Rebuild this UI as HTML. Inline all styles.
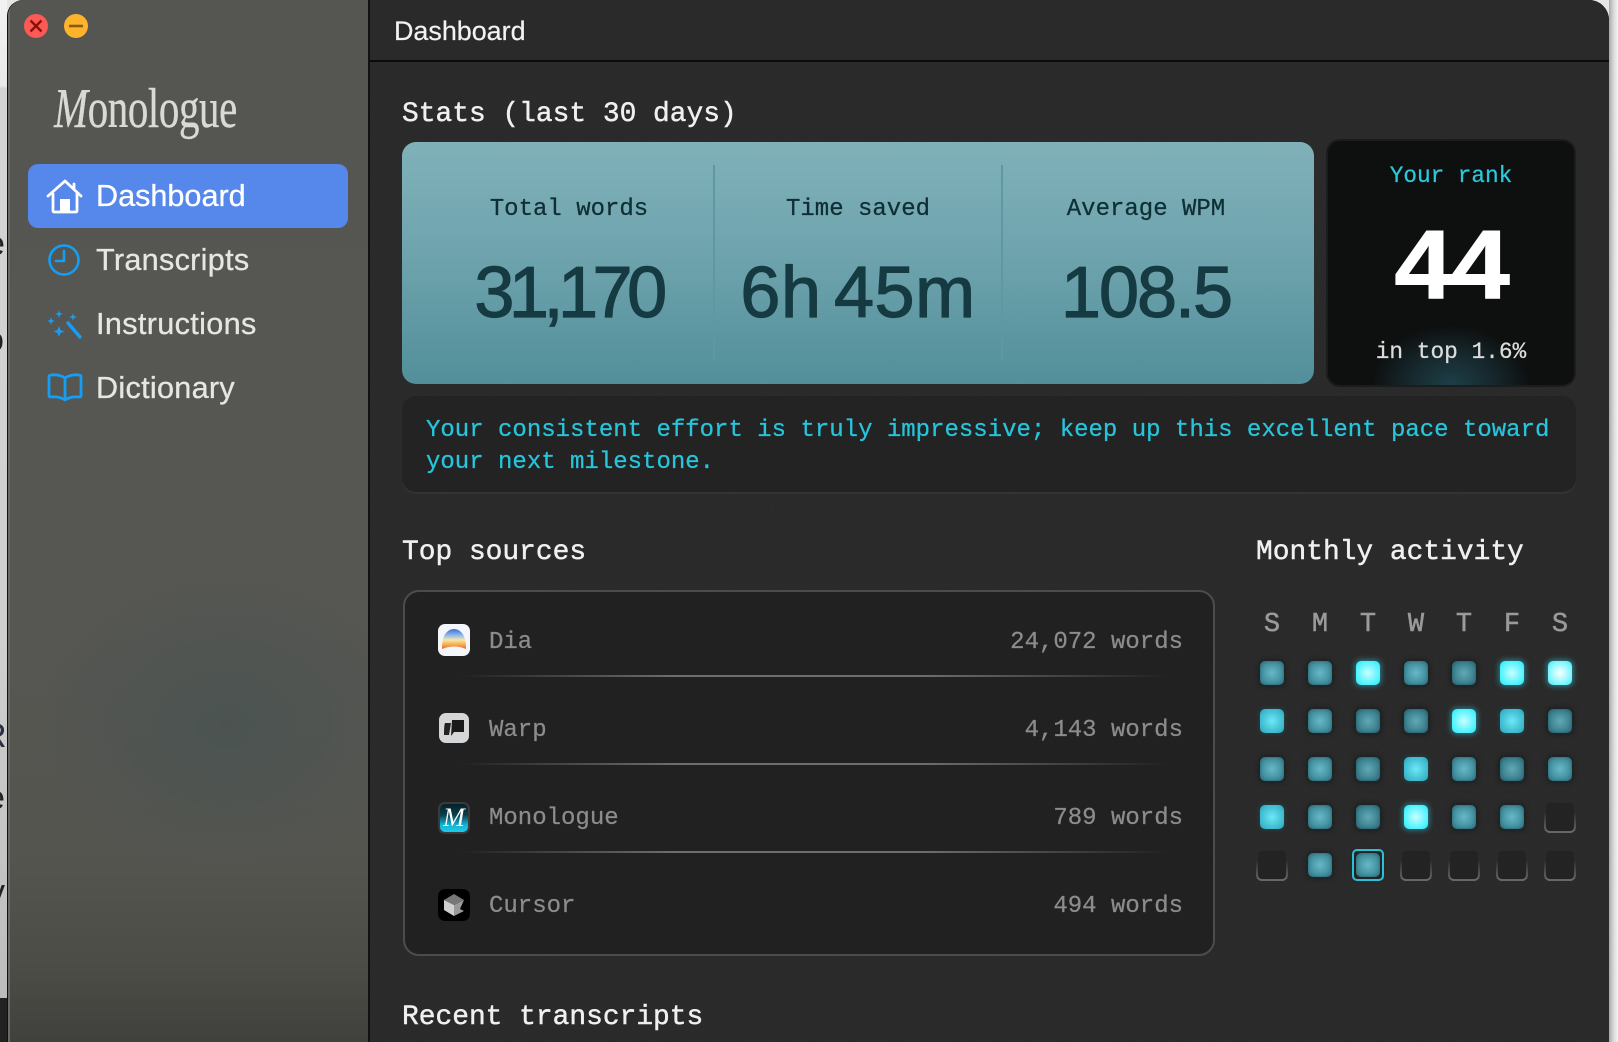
<!DOCTYPE html>
<html><head><meta charset="utf-8">
<style>
*,*:before,*:after{box-sizing:border-box;margin:0;padding:0}
html,body{width:1618px;height:1042px;overflow:hidden;background:#e6e6e6}
body{position:relative;font-family:"Liberation Sans",sans-serif}
.a{position:absolute;white-space:pre}
.m{font-family:"Liberation Mono",monospace}
.t{font-size:27.9px;line-height:34px;color:#f0f0f0;-webkit-text-stroke:.45px #f0f0f0}
#win{position:absolute;left:7px;top:0;width:1602px;height:1042px;border-radius:16px 20px 0 0;overflow:hidden;background:#2c2c2c;border-left:1.5px solid #111}
.lab{font-size:24px;line-height:30px;color:#0f2e35;text-align:center;width:280px;-webkit-text-stroke:.25px #0f2e35}
.num{font-size:72px;line-height:80px;color:#163a42;text-align:center;width:280px;-webkit-text-stroke:1.2px #163a42}
.nav{font-size:30.6px;line-height:40px;color:#e6e6e4;left:96px;-webkit-text-stroke:.3px #e6e6e4}
.src{font-size:24px;line-height:30px;color:#8c8c8c;-webkit-text-stroke:.25px #8c8c8c}
.div{position:absolute;left:460px;width:710px;height:2px;background:linear-gradient(90deg,rgba(130,130,130,0),#6e6e6e 30%,#6e6e6e 65%,rgba(130,130,130,0))}
.ic{position:absolute;left:438px;width:32px;height:32px;border-radius:7px;overflow:hidden}
.d{position:absolute;width:20px;font-size:27px;line-height:30px;top:610px;text-align:center;color:#9a9a9a;-webkit-text-stroke:.5px #9a9a9a}
#g{position:absolute;left:1248px;top:649px;display:grid;grid-template-columns:repeat(7,48px);grid-auto-rows:48px}
#g div{display:flex;align-items:center;justify-content:center}
#g i{display:block;width:24px;height:24px;border-radius:5px}
.l i{background:radial-gradient(circle,#5fa9b6 0,#3a7c8a 70%,#2f6b79 100%);box-shadow:0 0 4px 2px rgba(15,25,28,.55),inset 0 0 3px rgba(30,60,70,.5)}
.n i{background:radial-gradient(circle,#67b9c7 0,#3f8b9a 70%,#337888 100%);box-shadow:0 0 4px 2px rgba(15,25,28,.5),inset 0 0 3px rgba(30,60,70,.5)}
.h i{background:radial-gradient(circle,#6ce8f6 0,#3bb6cb 75%,#2f9cb2 100%);box-shadow:0 0 4px 1px rgba(30,90,100,.5)}
.b i{background:radial-gradient(circle,#c8ffff 0,#44f2ff 75%,#34e4f2 100%);box-shadow:0 0 6px 1px rgba(50,220,240,.5)}
.w i{background:radial-gradient(circle,#fbffff 0,#8cf7ff 60%,#3ceaf8 100%);box-shadow:0 0 6px 1px rgba(50,220,240,.55)}
#g .e i{width:32px;height:32px;border:2px solid transparent;border-radius:6px;background:linear-gradient(#232323,#232323) padding-box,linear-gradient(180deg,#2a2a2a 35%,#6a6a6a 100%) border-box;box-shadow:none}
.s{position:relative}
.s:after{content:"";position:absolute;left:8px;top:8px;width:32px;height:32px;border:2px solid #2bc0d6;border-radius:5px}
</style></head>
<body>
<div class="a" style="left:0;top:0;width:7px;height:1042px;overflow:hidden;background:linear-gradient(180deg,#f2f2f2 0,#e9e9e9 86px,#d4d4d4 88px,#cfcfcf 640px,#bcbcbc 1000px)">
  <div class="a" style="left:-14px;top:224px;font-size:34px;color:#222;line-height:40px">e</div>
  <div class="a" style="left:-15px;top:320px;font-size:34px;color:#222;line-height:40px">o</div>
  <div class="a" style="left:-18px;top:716px;font-size:34px;color:#2a3040;line-height:40px">R</div>
  <div class="a" style="left:-14px;top:778px;font-size:34px;color:#222;line-height:40px">e</div>
  <div class="a" style="left:-12px;top:872px;font-size:34px;color:#222;line-height:40px">v</div>
  <div class="a" style="left:0;top:998px;width:7px;height:44px;background:#222"></div>
</div>
<div class="a" style="left:1609px;top:0;width:9px;height:1042px;background:linear-gradient(90deg,#a8a8a8,#d8d8d8 50%,#f4f4f4)"></div>

<div id="win">
  <div class="a" style="left:0;top:0;height:1042px;background:radial-gradient(ellipse 190px 150px at 218px 725px,#4b5351 0,rgba(76,84,81,.6) 45%,rgba(80,84,80,0) 100%),linear-gradient(180deg,#555551 0,#565652 60%,#555550 82%,#4c4c47 93%,#40403c 100%);border-right:2px solid #111;box-shadow:inset 2px 0 0 #6a6a66;width:362px"></div>
  <div class="a" style="left:362px;top:0;width:1240px;height:1042px;background:#2d2d2d"></div>
  <div class="a" style="left:362px;top:0;width:1240px;height:62px;background:#2a2a2a;border-bottom:2px solid #0b0b0b"></div>
  <svg class="a" style="left:362px;top:62px;opacity:.12" width="1240" height="980"><filter id="nz"><feTurbulence type="fractalNoise" baseFrequency=".9" numOctaves="2"/><feColorMatrix values="0 0 0 0 0 0 0 0 0 0 0 0 0 0 0 0 0 0 1.6 -.4"/></filter><rect width="1240" height="980" filter="url(#nz)"/></svg>
</div>

<!-- traffic lights -->
<svg class="a" style="left:24px;top:14px" width="64" height="24">
  <circle cx="12" cy="12" r="12" fill="#fb5a55"/><path d="M6.500 6.500l11 11M17.500 6.500l-11 11" stroke="#8e0f0a" stroke-width="2.400"/>
  <circle cx="52" cy="12" r="12" fill="#fdb32c"/><path d="M45 12h14" stroke="#8a5a10" stroke-width="2.600"/>
</svg>

<!-- logo -->
<div class="a" style="left:54px;top:77px;font-family:'Liberation Serif',serif;font-size:56px;line-height:64px;color:#d9d9d5;transform:scaleX(.73);transform-origin:0 50%;letter-spacing:-.5px;-webkit-text-stroke:.4px #d9d9d5"><i>M</i>onologue</div>

<!-- nav -->
<div class="a" style="left:28px;top:164px;width:320px;height:64px;border-radius:10px;background:#5588ea"></div>
<svg class="a" style="left:46px;top:178px" width="38" height="36" fill="none" stroke="#fff" stroke-width="2.800" stroke-linecap="round" stroke-linejoin="round">
  <path d="M2 18L19 3l16 15"/><path d="M28 6v5"/><path d="M7 16v16.500q0 1.500 1.500 1.500h21q1.500 0 1.500-1.500V16"/>
  <rect x="14" y="21" width="10" height="13" fill="#fff" stroke="none"/>
</svg>
<div class="a nav" style="top:176px;color:#fff;-webkit-text-stroke:.3px #fff">Dashboard</div>
<svg class="a" style="left:47px;top:243px" width="34" height="34" fill="none" stroke="#159ef5" stroke-width="2.600" stroke-linecap="round" stroke-linejoin="round">
  <circle cx="17" cy="17" r="14.500"/><path d="M17 8v10H9"/>
</svg>
<div class="a nav" style="top:240px;letter-spacing:.3px">Transcripts</div>
<svg class="a" style="left:47px;top:308px" width="36" height="34" fill="#159ef5">
  <path d="M12 2l1 3 3 1-3 1-1 3-1-3-3-1 3-1zM4 9l1 3 3 1-3 1-1 3-1-3-3-1 3-1zM26 5l1 3 3 1-3 1-1 3-1-3-3-1 3-1zM12 18l1.500 4 4 1.500-4 1.500-1.500 4-1.500-4-4-1.500 4-1.500z"/>
  <path d="M21 15l12 14" stroke="#159ef5" stroke-width="3.400" stroke-linecap="round"/>
</svg>
<div class="a nav" style="top:304px;letter-spacing:.35px">Instructions</div>
<svg class="a" style="left:47px;top:372px" width="36" height="30" fill="none" stroke="#159ef5" stroke-width="2.800" stroke-linejoin="round" stroke-linecap="round">
  <path d="M18 6Q12 2 4 3Q2 3 2 5V24Q2 25 4 25Q12 24 18 28Q24 24 32 25Q34 25 34 24V5Q34 3 32 3Q24 2 18 6V27"/>
</svg>
<div class="a nav" style="top:368px;letter-spacing:.3px">Dictionary</div>

<!-- header -->
<div class="a" style="left:394px;top:14px;font-size:26.900px;line-height:34px;color:#f2f2f2;-webkit-text-stroke:.2px #f2f2f2">Dashboard</div>
<div class="a m t" style="left:402px;top:98px">Stats (last 30 days)</div>

<!-- stats -->
<div class="a" style="left:402px;top:142px;width:912px;height:242px;border-radius:14px;background:linear-gradient(180deg,#80b1b9 0,#6fa4ae 45%,#528f9a 100%)"></div>
<div class="a" style="left:713px;top:165px;width:1.500px;height:195px;background:#5e98a4"></div>
<div class="a" style="left:1001px;top:165px;width:1.500px;height:195px;background:#5e98a4"></div>
<div class="a m lab" style="left:429px;top:195px">Total words</div>
<div class="a m lab" style="left:718px;top:195px">Time saved</div>
<div class="a m lab" style="left:1006px;top:195px">Average WPM</div>
<div class="a num" style="left:428px;top:253px;letter-spacing:-5.500px">31,170</div>
<div class="a num" style="left:718px;top:253px;letter-spacing:.5px;word-spacing:-8px">6h 45m</div>
<div class="a num" style="left:1006px;top:253px;letter-spacing:-2px">108.5</div>

<!-- rank -->
<div class="a" style="left:1326px;top:139px;width:250px;height:248px;border-radius:14px;border:2px solid #1b1c1c;background:radial-gradient(ellipse 80px 60px at 50% 100%,#1d3f48 0,rgba(29,63,72,.55) 50%,rgba(14,15,15,0) 100%),#0e0f0f"></div>
<div class="a m" style="left:1327px;top:161px;width:248px;text-align:center;font-size:22.700px;line-height:30px;color:#2bc8dc;-webkit-text-stroke:.25px #2bc8dc">Your rank</div>
<div class="a" style="left:1327px;top:215px;width:248px;text-align:center;font-size:97px;line-height:100px;font-weight:700;color:#fff;letter-spacing:-2px;transform:scaleX(1.09);-webkit-text-stroke:1px #fff">44</div>
<div class="a m" style="left:1327px;top:337px;width:248px;text-align:center;font-size:22.800px;line-height:30px;color:#dcdcdc;-webkit-text-stroke:.25px #dcdcdc">in top 1.6%</div>

<!-- notice -->
<div class="a" style="left:402px;top:396px;width:1174px;height:96px;border-radius:14px;background:#232323;box-shadow:0 2px 0 #333"></div>
<div class="a m" style="left:426px;top:415px;font-size:24px;line-height:32px;color:#27c5dc;-webkit-text-stroke:.25px #27c5dc">Your consistent effort is truly impressive; keep up this excellent pace toward
your next milestone.</div>

<div class="a m t" style="left:402px;top:536px">Top sources</div>
<div class="a m t" style="left:1256px;top:536px">Monthly activity</div>

<!-- sources -->
<div class="a" style="left:403px;top:590px;width:812px;height:366px;border-radius:16px;background:#212121;border:2px solid #4c4c4c"></div>
<div class="div" style="top:675px"></div>
<div class="div" style="top:763px"></div>
<div class="div" style="top:851px"></div>

<div class="ic" style="top:624px;background:#f4f6fb">
  <svg width="32" height="32"><defs><linearGradient id="dg" x1="0" y1="0" x2="0" y2="1"><stop offset="0" stop-color="#3a70d8"/><stop offset=".3" stop-color="#8db6ec"/><stop offset=".55" stop-color="#f8e6a8"/><stop offset=".8" stop-color="#f6a848"/><stop offset="1" stop-color="#e8623a"/></linearGradient></defs>
  <path d="M4 23C4 12 9 5 16 5S28 12 28 23L28 25Q16 20 4 25Z" fill="url(#dg)"/></svg>
</div>
<div class="ic" style="top:713px;background:#d4d6d8;left:439px;width:30px;height:30px">
  <svg width="30" height="30"><path d="M6 10h6l-2 12H5Q5 12 6 10z" fill="#222"/><path d="M13 7h12v12H15l-3 4z" fill="#1a1a1a"/></svg>
</div>
<div class="ic" style="top:802px;border:2px solid #3a3a3a;background:linear-gradient(180deg,#062028 0,#0a3f4e 40%,#16b5d6 75%,#1ccbe8 100%);text-align:center;font-family:'Liberation Serif',serif;font-style:italic;color:#fff;font-size:26px;line-height:27px">M</div>
<div class="ic" style="top:889px;background:#000">
  <svg width="32" height="32"><path d="M16 5l10 6-10 5-10-5z" fill="#777"/><path d="M6 11l10 5v11l-10-6z" fill="#d0d0d0"/><path d="M16 16l10-5-4 9 4 2-10 5z" fill="#9a9a9a"/></svg>
</div>

<div class="a m src" style="left:489px;top:628px">Dia</div>
<div class="a m src" style="left:489px;top:716px">Warp</div>
<div class="a m src" style="left:489px;top:804px">Monologue</div>
<div class="a m src" style="left:489px;top:892px">Cursor</div>
<div class="a m src" style="right:435px;top:628px">24,072 words</div>
<div class="a m src" style="right:435px;top:716px">4,143 words</div>
<div class="a m src" style="right:435px;top:804px">789 words</div>
<div class="a m src" style="right:435px;top:892px">494 words</div>

<!-- calendar -->
<div class="d m" style="left:1262px">S</div>
<div class="d m" style="left:1310px">M</div>
<div class="d m" style="left:1358px">T</div>
<div class="d m" style="left:1406px">W</div>
<div class="d m" style="left:1454px">T</div>
<div class="d m" style="left:1502px">F</div>
<div class="d m" style="left:1550px">S</div>
<div id="g">
  <div class="n"><i></i></div><div class="n"><i></i></div><div class="b"><i></i></div><div class="n"><i></i></div><div class="l"><i></i></div><div class="b"><i></i></div><div class="w"><i></i></div>
  <div class="h"><i></i></div><div class="n"><i></i></div><div class="l"><i></i></div><div class="l"><i></i></div><div class="b"><i></i></div><div class="h"><i></i></div><div class="l"><i></i></div>
  <div class="n"><i></i></div><div class="n"><i></i></div><div class="l"><i></i></div><div class="h"><i></i></div><div class="n"><i></i></div><div class="l"><i></i></div><div class="n"><i></i></div>
  <div class="h"><i></i></div><div class="n"><i></i></div><div class="l"><i></i></div><div class="b"><i></i></div><div class="n"><i></i></div><div class="n"><i></i></div><div class="e"><i></i></div>
  <div class="e"><i></i></div><div class="n"><i></i></div><div class="n s"><i></i></div><div class="e"><i></i></div><div class="e"><i></i></div><div class="e"><i></i></div><div class="e"><i></i></div>
</div>

<div class="a m t" style="left:402px;top:1001px">Recent transcripts</div>
</body></html>
